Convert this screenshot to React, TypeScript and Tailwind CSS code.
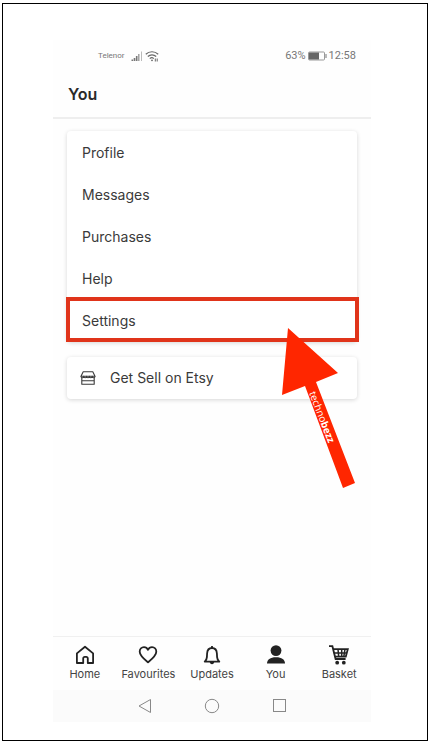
import type { ReactNode } from 'react';

const menuItems = ['Profile', 'Messages', 'Purchases', 'Help', 'Settings'];

const HomeIcon = () => (
    <svg className="h-5 w-5" viewBox="0 0 20 20" fill="none" stroke="currentColor" strokeWidth="1.8" strokeLinejoin="round" aria-hidden="true">
        <path d="M1.900 8.400 10 1.800l8.100 6.600V18h-5.300v-4.600a1.500 1.500 0 0 0-1.500-1.500H9.700a1.500 1.500 0 0 0-1.500 1.500V18H1.900z" />
    </svg>
);

const HeartIcon = () => (
    <svg className="h-5 w-5" viewBox="0 0 20 20" fill="none" stroke="currentColor" strokeWidth="1.8" strokeLinejoin="round" aria-hidden="true">
        <path d="M10 17.300C6 14 1.700 10.600 1.700 6.700c0-2.600 1.900-4.500 4.300-4.500 1.700 0 3.200 1 4 2.600.8-1.600 2.300-2.600 4-2.600 2.400 0 4.300 1.900 4.300 4.500 0 3.900-4.300 7.300-8.300 10.600z" />
    </svg>
);

const BellIcon = () => (
    <svg className="h-5 w-5" viewBox="0 0 20 20" fill="none" stroke="currentColor" strokeWidth="1.8" strokeLinejoin="round" aria-hidden="true">
        <path d="M2.700 16.600c1.600-1.300 2.100-2.600 2.200-4.500l.2-3.600C5.300 5.100 7.300 3 10 3s4.700 2.100 4.900 5.500l.2 3.600c.1 1.900.6 3.200 2.200 4.500z" />
        <path d="M10 1v2" />
        <path d="M7.800 17h4.400c0 1.400-.9 2.200-2.200 2.200S7.800 18.400 7.800 17z" fill="currentColor" stroke="none" />
    </svg>
);

const PersonIcon = () => (
    <svg className="h-5 w-5" viewBox="0 0 20 20" fill="currentColor" aria-hidden="true">
        <circle cx="10" cy="5.600" r="5.400" />
        <path d="M1 18.600c0-4 3.200-6.400 9-6.400s9 2.400 9 6.400z" />
    </svg>
);

const BasketIcon = () => (
    <svg className="h-5 w-5" viewBox="0 0 20 20" fill="none" stroke="currentColor" strokeWidth="1.800" aria-hidden="true">
        <path d="M0 1.200h3.400L6.600 14h10" />
        <path d="M4.200 4.200h14.600l-2 7.400H6" />
        <path d="M4.800 7.900H18M9 4.200l.7 7.400M12.700 4.200v7.400M16 4.200l-1.200 7.400" strokeWidth="1.500" />
        <circle cx="8.200" cy="17.700" r="1.900" fill="currentColor" stroke="none" />
        <circle cx="14.800" cy="17.700" r="1.900" fill="currentColor" stroke="none" />
    </svg>
);

const ShopIcon = () => (
    <svg className="h-4 w-4" viewBox="0 0 16 16" fill="none" stroke="currentColor" strokeWidth="1.100" strokeLinejoin="round" aria-hidden="true">
        <path d="M3.200 1.800h9.600L15 6.200H1z" />
        <path d="M1 6.200c0 2 2.800 2 2.800 0 0 2 2.800 2 2.800 0 0 2 2.800 2 2.800 0 0 2 2.800 2 2.800 0 0 2 2.800 2 2.800 0" />
        <path d="M1.800 8v6.200h12.400V8M1.800 10.800h12.400" />
    </svg>
);

const SignalIcon = () => (
    <svg className="h-3 w-3" viewBox="0 0 12 12" fill="#777" aria-hidden="true">
        <path d="M.5 9.500h1.600V11H.5zM2.700 8h1.600v3H2.700zM4.900 6h1.600v5H4.900z" />
        <path d="M7.100 4h1.400v7H7.100z" fill="#999" />
        <path d="M10 1.500h1V11h-1z" fill="#bbb" />
    </svg>
);

const WifiIcon = () => (
    <svg className="h-3 w-3.5" viewBox="0 0 14 12" fill="none" stroke="#666" strokeWidth="1.200" aria-hidden="true">
        <path d="M.8 4.300C4.300.9 9.700.9 13.200 4.300M2.800 6.500c2.400-2.300 6-2.300 8.400 0M4.800 8.600c1.300-1.200 2.700-1.200 4 0" />
        <circle cx="7" cy="10.300" r=".9" fill="#666" stroke="none" />
        <path d="M10.300 8.500v3M12.200 8.500v3" strokeWidth="1" />
    </svg>
);

const BatteryIcon = () => (
    <svg className="h-3 w-[19px]" viewBox="0 0 19 12" aria-hidden="true">
        <rect x=".5" y="2" width="16" height="8" rx="1" fill="none" stroke="#999" />
        <path d="M1 2.500h10v7H1z" fill="#666" />
        <path d="M17.500 4h1v4h-1z" fill="#777" />
    </svg>
);

const tabs: { label: string; icon: ReactNode }[] = [
    { label: 'Home', icon: <HomeIcon /> },
    { label: 'Favourites', icon: <HeartIcon /> },
    { label: 'Updates', icon: <BellIcon /> },
    { label: 'You', icon: <PersonIcon /> },
    { label: 'Basket', icon: <BasketIcon /> },
];

const PointerArrow = () => (
    <svg className="pointer-events-none absolute top-7 right-0 h-[164px] w-20" viewBox="0 0 80 164" role="img" aria-label="technobezz">
        <path d="M11 0 61 45 39 54 78 155 66 160 28 58 5 67z" fill="#ff2600" />
        <text transform="translate(32 65) rotate(69)" fill="#fff" fontSize="10" className="font-['Open_Sans',sans-serif]">
            techno<tspan fontWeight="700">bezz</tspan>
        </text>
    </svg>
);

const StatusBar = () => (
    <div className="flex h-8 items-center justify-between pr-[15px] pl-[45px] font-[Roboto,sans-serif] text-[#777]">
        <div className="flex items-center gap-0.5">
            <span className="mr-1 text-[8px]">Telenor</span>
            <SignalIcon />
            <WifiIcon />
        </div>
        <div className="flex items-center gap-0.5 text-[11px]">
            <span>63%</span>
            <BatteryIcon />
            <span>12:58</span>
        </div>
    </div>
);

const SystemBar = () => (
    <div className="flex h-8 items-center justify-center gap-[51px] bg-[#fbfbfb] text-[#888]">
        <button type="button" aria-label="Back">
            <svg className="h-4 w-4" viewBox="0 0 16 16" fill="none" stroke="currentColor" strokeLinejoin="round">
                <path d="M13.500 1.500v13L2 8z" />
            </svg>
        </button>
        <button type="button" aria-label="Home screen">
            <svg className="h-4 w-4" viewBox="0 0 16 16" fill="none" stroke="currentColor">
                <circle cx="8" cy="8" r="6.700" />
            </svg>
        </button>
        <button type="button" aria-label="Recent apps">
            <svg className="h-4 w-4" viewBox="0 0 16 16" fill="none" stroke="currentColor">
                <rect x="2.500" y="1.500" width="12" height="12" />
            </svg>
        </button>
    </div>
);

export default function App() {
    return (
        <div className="flex min-h-screen bg-white px-0.5 pt-[3px] pb-0.5 font-[Inter,sans-serif] text-[#3a3a3a]">
            <div className="flex flex-1 border border-black pt-9 pr-14 pb-[18px] pl-[50px]">
                <div className="flex flex-1 flex-col bg-[#fefefe]">
                    <StatusBar />
                    <header className="flex h-[47px] items-center border-b-2 border-[#eee] px-[15px] pb-0.5">
                        <h1 className="text-base font-semibold text-[#2a2a2a]">You</h1>
                    </header>

                    <main className="flex flex-1 flex-col gap-[15px] px-3.5 pt-3 pb-6">
                        <ul className="rounded-sm bg-white pt-px shadow-[0_1px_4px_rgba(0,0,0,0.16)]">
                            {menuItems.map((item) => (
                                <li key={item} className="relative">
                                    <button type="button" className="flex h-[42px] w-full items-center px-[15px] text-sm">
                                        {item}
                                    </button>
                                    {item === 'Settings' && (
                                        <>
                                            <div className="pointer-events-none absolute -top-[3px] -right-0.5 bottom-0 -left-px border-4 border-[#e0341a]" />
                                            <PointerArrow />
                                        </>
                                    )}
                                </li>
                            ))}
                        </ul>

                        <button type="button" className="flex h-[42px] items-center gap-3.5 rounded-sm bg-white px-[13px] text-sm shadow-[0_1px_4px_rgba(0,0,0,0.16)]">
                            <ShopIcon />
                            Get Sell on Etsy
                        </button>
                    </main>

                    <nav className="grid h-[54px] grid-cols-5 border-t border-[#f0f0f0]">
                        {tabs.map(({ label, icon }) => (
                            <button key={label} type="button" className="flex flex-col items-center gap-px pt-2 text-[#222]">
                                {icon}
                                <span className="text-[11px] leading-4 text-[#444]">{label}</span>
                            </button>
                        ))}
                    </nav>
                    <SystemBar />
                </div>
            </div>
        </div>
    );
}
